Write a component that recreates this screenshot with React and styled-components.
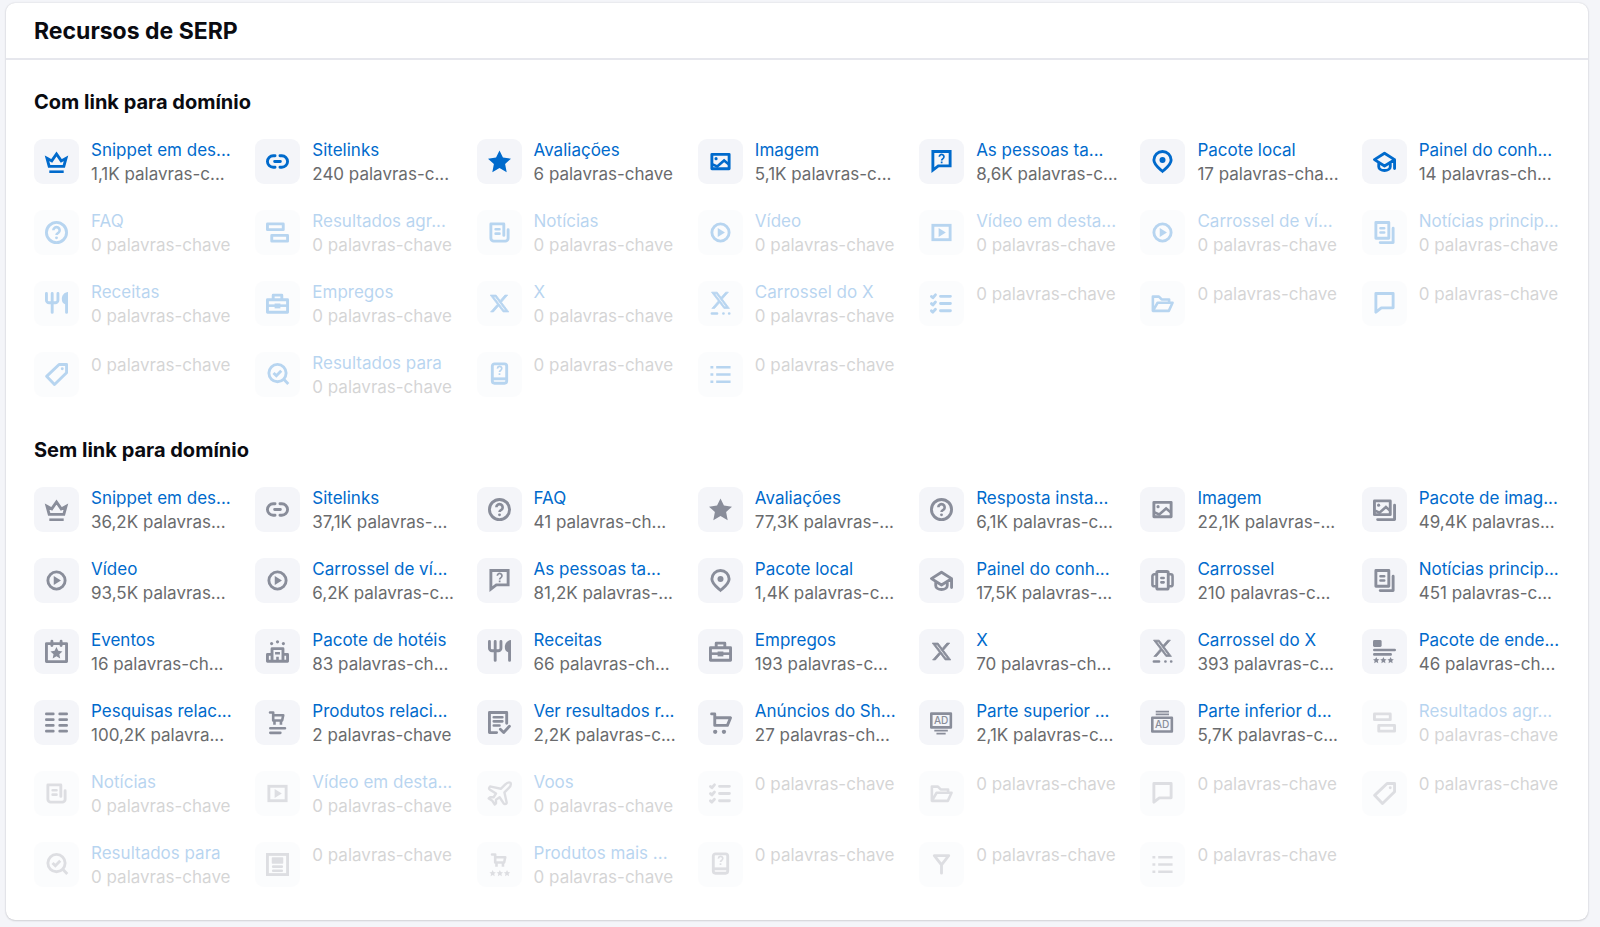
import React from "react";
import styled, { createGlobalStyle } from "styled-components";

const GlobalStyle = createGlobalStyle`
    :root {
        --page: #f4f5f9;
        --title: #0a0b11;
        --blue: #006aCC;
        --gray: #6a6b6d;
        --icon-gray: #898d9a;
        --line: #e6e7ed;
    }

    body {
        margin: 0;
        background-color: var(--page);
        font-family: Inter, "Liberation Sans", sans-serif;
    }
`

const Card = styled.section`
    margin: 3px 12px 8px 6px;
    background-color: white;
    border-radius: 9px;
    box-shadow: 0 0 2px rgba(25, 27, 35, 0.16), 0 1px 2px rgba(25, 27, 35, 0.12);
`

const CardHeader = styled.header`
    padding: 13px 29px 11px 28px;
    border-bottom: 2px solid var(--line);
`

const CardTitle = styled.h2`
    margin: 0;
    font-size: 23px;
    line-height: 31px;
    font-weight: 700;
    color: var(--title);
`

const CardBody = styled.div`
    display: flex;
    flex-direction: column;
    gap: 35px;
    padding: 28px 29px 29px 28px;
`

const GroupTitle = styled.h3`
    margin: 0 0 23px 0;
    font-size: 20px;
    line-height: 28px;
    font-weight: 700;
    color: var(--title);
`

const FeatureGrid = styled.ul`
    display: grid;
    grid-template-columns: repeat(7, minmax(0, 1fr));
    gap: 23px 24px;
    margin: 0;
    padding: 0 0 1px 0;
    list-style: none;
`

const FeatureItem = styled.li`
    display: flex;
    align-items: flex-start;
    gap: 12px;
    min-height: 48px;
    opacity: ${({ $empty }) => ($empty ? 0.28 : 1)};
`

const IconBox = styled.span`
    display: flex;
    flex: none;
    align-items: center;
    justify-content: center;
    width: 45px;
    height: 45px;
    border-radius: 9px;
    background-color: var(--page);
    color: ${({ $linked }) => ($linked ? 'var(--blue)' : 'var(--icon-gray)')};
`

const Glyph = styled.svg`
    width: 23px;
    height: 23px;
    overflow: visible;
    fill: none;
    stroke: currentColor;
    stroke-width: 2;

    .solid {
        fill: currentColor;
        stroke: none;
    }

    .thin {
        stroke-width: 1.2;
    }

    .medium {
        stroke-width: 1.8;
    }

    .logo {
        fill: currentColor;
        stroke-width: 0.9;
    }

    .round {
        stroke-linecap: round;
        stroke-linejoin: round;
    }

    text {
        fill: currentColor;
        stroke: none;
        font-size: 7px;
        font-weight: 500;
        text-anchor: middle;
    }
`

const FeatureText = styled.div`
    min-width: 0;
    white-space: nowrap;
    font-size: 17px;
`

const FeatureLink = styled.a`
    display: block;
    line-height: 22px;
    color: var(--blue);
    text-decoration: none;

    &:hover {
        text-decoration: underline;
    }
`

const FeatureCount = styled.div`
    line-height: 26px;
    color: var(--gray);
`

const starPath = "M8 .3 10.4 5.3 16 6 11.9 9.7 13 15.4 8 12.6 3 15.4 4.1 9.7 0 6 5.6 5.3Z"
const xPath = "M18.244 2.25h3.308l-7.227 8.26 8.502 11.24H16.17l-5.214-6.817L4.99 21.75H1.68l7.73-8.835L1.254 2.25H8.08l4.713 6.231zm-1.161 17.52h1.833L7.084 4.126H5.117z"

const SmallStars = ({ from }) => (
    <>
        {[0, 5, 10].map((step) => (
            <path key={step} className="solid" d={starPath} transform={`translate(${from + step} 11.8) scale(.28)`} />
        ))}
    </>
)

const SmallCart = () => (
    <>
        <path className="round medium" d="M2.8 1H5v5.6h6.2L12 3H5" />
        <path className="medium" d="M5.9 7v2.6M10.4 7v2.6" />
    </>
)

const icons = {
    crown: <><path d="M1.4 5.8 4.7 7.6 8 2.8l3.3 4.8 3.3-1.8-1.5 5.6H2.9Z" /><path className="medium" d="M3 15.1h10" /></>,
    link: <path className="round" d="M6.3 4H5a4 4 0 0 0 0 8h1.3M9.7 4H11a4 4 0 0 1 0 8H9.7M6 8h4" />,
    star: <path className="solid" d={starPath} />,
    image: (
        <>
            <rect className="round" x="2" y="3" width="12" height="10" />
            <path className="medium" d="m2.5 10 3.2 1.4 4.8-4.1 3.2 2.6" />
            <circle className="solid" cx="4.9" cy="6" r="1.1" />
        </>
    ),
    images: (
        <>
            <rect className="round" x="1" y="2" width="11" height="9.6" />
            <path className="medium" d="m1.5 8.8 3 1.4L9 6.3l2.8 2.5" />
            <circle className="solid" cx="3.9" cy="5" r="1.1" />
            <path className="round" d="M15 5v10H3.2" />
        </>
    ),
    askChat: (
        <>
            <path d="M2 14V1h12v10H5.8Z" />
            <path className="thin" d="M6.5 4.7a1.6 1.6 0 1 1 2.5 1.3c-.7.5-.9.7-.9 1.3M8.1 8v1.2" />
        </>
    ),
    pin: <><path d="M8 14.8C6 13 2 10.5 2 7a6 6 0 0 1 12 0c0 3.5-4 6-6 7.8Z" /><circle className="solid" cx="8" cy="7" r="2.1" /></>,
    cap: <path className="round" d="M1 6.7 8 2.3l7 4.4-7 4.4ZM15 6.7V12.9M4 9v2.6c0 1.5 1.8 2.7 4 2.7s4-1.2 4-2.7V9" />,
    question: (
        <>
            <circle cx="8" cy="8" r="7" />
            <path className="medium" d="M5.8 6.5a2.2 2.2 0 1 1 3.4 1.8c-.9.5-1.2.7-1.2 1.4" />
            <circle className="solid" cx="8" cy="11.7" r="1" />
        </>
    ),
    blocks: <><rect className="round" x="1" y="2" width="11" height="4" /><rect className="round" x="4" y="10" width="11" height="4" /></>,
    news: (
        <>
            <path className="round" d="M14 6v6a2 2 0 0 1-2 2H4a2 2 0 0 1-2-2V2h9v8" />
            <path className="round medium" d="M5.3 5.7H8M5.3 8.8H8" />
        </>
    ),
    video: <><circle cx="8" cy="8" r="6" /><path className="solid" d="M6.1 4.8 11.1 8l-5 3.2Z" /></>,
    videoBox: <><rect x="2" y="3" width="12" height="10" /><path className="solid" d="M6 4.9 11 8l-5 3.1Z" /></>,
    topNews: (
        <>
            <rect className="round" x="2" y="1" width="9" height="11" />
            <path className="round medium" d="M5.2 5h2.6M5.2 8h2.6" />
            <path className="round" d="M14 5v10H5" />
        </>
    ),
    cutlery: (
        <>
            <path className="round" d="M1 1v4.7a1.8 1.8 0 0 0 1.8 1.8h4.4A1.8 1.8 0 0 0 9 5.7V1M5 1v13.2M15 8v6.2" />
            <path className="solid" d="M16 0c-2.6.2-4.3 2.3-4.3 4.8 0 1.9.8 3.2 2.3 3.7h2Z" />
        </>
    ),
    briefcase: (
        <>
            <path className="round" d="M5 5V2.2h6V5" />
            <rect className="round" x="1" y="5.4" width="14" height="8.7" />
            <path className="medium" d="M1 9.5h14" />
            <path className="solid" d="M6 8h4v3.4H6Z" />
        </>
    ),
    x: <path className="logo" d={xPath} transform="translate(.8 .8) scale(.6)" />,
    xCarousel: (
        <>
            <path className="logo" d={xPath} transform="translate(1 -1.2) scale(.58)" />
            <path className="round medium" d="M2 14.9h3.6M10 14.9h.1M14 14.9h.1" />
        </>
    ),
    checklist: <path className="round" d="M1 3.1l1 .9 1.8-2M1 8.1l1 .9 1.8-2M1 13.1l1 .9 1.8-2M7.3 3h6.9M7.3 8h6.9M7.3 13h6.9" />,
    folder: <path className="round medium" d="M1.3 13V3.2h4.2l1.9 2h5.2v2.3M1.3 13.1l3.3-5.6H15l-2.6 5.6Z" />,
    chat: <path className="round" d="M2 14V1h12v10H5.8Z" />,
    tag: <><path className="round" d="M9.8 1H15v5.8L6.6 15 1.1 9.3Z" /><circle className="solid" cx="12" cy="4" r="1" /></>,
    searchCheck: <><circle cx="8" cy="7" r="6" /><path d="M12.2 11.2l3.3 3.4M5.2 6.9l2 1.9 3.4-3.4" /></>,
    book: (
        <>
            <rect x="3" y=".6" width="10" height="13.5" rx="1.5" />
            <path d="M3 11h10" />
            <path className="thin" d="M6.6 3.9a1.5 1.5 0 1 1 2.3 1.2c-.7.5-.9.6-.9 1.2M8 7.2v1.2" />
        </>
    ),
    list: <path className="medium" d="M5 3h10M5 8h10M5 13h10M1 3h2M1 8h2M1 13h2" />,
    carousel: (
        <>
            <rect className="round" x="4" y="1.7" width="8" height="12.3" rx="1" />
            <path className="round medium" d="M3.5 3.7H2.3A1.3 1.3 0 0 0 1 5v5.7A1.3 1.3 0 0 0 2.3 12h1.2M12.5 3.7h1.2A1.3 1.3 0 0 1 15 5v5.7a1.3 1.3 0 0 1-1.3 1.3h-1.2" />
            <path className="round medium" d="M7.2 6.3h1.6M7.2 9.3h1.6" />
        </>
    ),
    event: (
        <>
            <rect className="round" x="1" y="2.5" width="14" height="12.5" />
            <path className="round" d="M4.8.8v3M11.2.8v3" />
            <path className="solid" d={starPath} transform="translate(3.8 4.8) scale(.52)" />
        </>
    ),
    hotel: (
        <>
            <path className="round" d="M4.2 14.8V6h7.6v8.8M1 14.8V10h3M15 14.8V10h-3M1 14.8h14" />
            <path className="medium" d="M6.3 9.2h3.4M8 11.7v3" />
            <circle className="solid" cx="3.9" cy="2.5" r="1.1" />
            <circle className="solid" cx="8" cy="1.3" r="1.1" />
            <circle className="solid" cx="12.1" cy="2.5" r="1.1" />
        </>
    ),
    address: (
        <>
            <rect className="solid" x="0" y="0" width="6" height="4.8" rx="1" />
            <path className="round medium" d="M.9 7h14.2M.9 10h11.4" />
            <SmallStars from={0} />
        </>
    ),
    columns: <path className="round medium" d="M.9 2h4.9M.9 6h4.9M.9 10h4.9M.9 14h4.9M10.2 2h4.9M10.2 6h4.9M10.2 10h4.9M10.2 14h4.9" />,
    relatedCart: <><SmallCart /><path className="round medium" d="M3 12h10.2M3 15.2h7" /></>,
    docCheck: (
        <>
            <path className="round" d="M6 15H1V1h12v7.5M8.6 12.7l2.3 2.2 4-4.3" />
            <path className="round medium" d="M4 4.3h6M4 7.2h6M4 10.1h4" />
        </>
    ),
    cart: (
        <>
            <path className="round" d="M1.8 2H4v8h8.8l2.2-5.3H4" />
            <circle className="solid" cx="4.3" cy="14.5" r="1.5" />
            <circle className="solid" cx="10.4" cy="14.5" r="1.5" />
        </>
    ),
    adTop: (
        <>
            <rect className="round medium" x=".9" y="1.8" width="13.6" height="9.6" />
            <text x="7.7" y="9.1">AD</text>
            <path className="thin" d="M3 13.7h9.4M4.5 15.7h6.4" />
        </>
    ),
    adBottom: (
        <>
            <rect className="round medium" x=".9" y="4.7" width="13.6" height="9.6" />
            <text x="7.7" y="12">AD</text>
            <path className="thin" d="M3.3.4h9.2M3.3 2.4h9.2" />
        </>
    ),
    plane: (
        <path
            className="round"
            transform="translate(-2 -2) scale(.84)"
            d="M17.8 19.2 16 11l3.5-3.5C21 6 21.5 4 21 3c-1-.5-3 0-4.5 1.5L13 8 4.8 6.2c-.5-.1-.9.1-1.1.5l-.3.5c-.2.5-.1 1 .3 1.3L9 12l-2 3H4l-1 1 3 2 2 3 1-1v-3l3-2 3.5 5.3c.3.4.8.5 1.3.3l.5-.2c.4-.3.6-.7.5-1.2z"
        />
    ),
    page: (
        <>
            <rect x="1" y="1" width="14" height="14" />
            <rect className="solid" x="4" y="3" width="8" height="4.4" rx=".5" />
            <path className="round medium" d="M5 9.5h6M5 12.3h6" />
        </>
    ),
    popularCart: <><SmallCart /><SmallStars from={1} /></>,
    filter: <path className="round" d="M3 1.8h10L8 8.2ZM8 8.2V14" />,
}

const linkedFeatures = [
    { icon: 'crown', name: 'Snippet em des...', count: '1,1K palavras-c...' },
    { icon: 'link', name: 'Sitelinks', count: '240 palavras-c...' },
    { icon: 'star', name: 'Avaliações', count: '6 palavras-chave' },
    { icon: 'image', name: 'Imagem', count: '5,1K palavras-c...' },
    { icon: 'askChat', name: 'As pessoas ta...', count: '8,6K palavras-c...' },
    { icon: 'pin', name: 'Pacote local', count: '17 palavras-cha...' },
    { icon: 'cap', name: 'Painel do conh...', count: '14 palavras-ch...' },
    { icon: 'question', name: 'FAQ' },
    { icon: 'blocks', name: 'Resultados agr...' },
    { icon: 'news', name: 'Notícias' },
    { icon: 'video', name: 'Vídeo' },
    { icon: 'videoBox', name: 'Vídeo em desta...' },
    { icon: 'video', name: 'Carrossel de ví...' },
    { icon: 'topNews', name: 'Notícias princip...' },
    { icon: 'cutlery', name: 'Receitas' },
    { icon: 'briefcase', name: 'Empregos' },
    { icon: 'x', name: 'X' },
    { icon: 'xCarousel', name: 'Carrossel do X' },
    { icon: 'checklist' },
    { icon: 'folder' },
    { icon: 'chat' },
    { icon: 'tag' },
    { icon: 'searchCheck', name: 'Resultados para' },
    { icon: 'book' },
    { icon: 'list' },
]

const unlinkedFeatures = [
    { icon: 'crown', name: 'Snippet em des...', count: '36,2K palavras...' },
    { icon: 'link', name: 'Sitelinks', count: '37,1K palavras-...' },
    { icon: 'question', name: 'FAQ', count: '41 palavras-ch...' },
    { icon: 'star', name: 'Avaliações', count: '77,3K palavras-...' },
    { icon: 'question', name: 'Resposta insta...', count: '6,1K palavras-c...' },
    { icon: 'image', name: 'Imagem', count: '22,1K palavras-...' },
    { icon: 'images', name: 'Pacote de imag...', count: '49,4K palavras...' },
    { icon: 'video', name: 'Vídeo', count: '93,5K palavras...' },
    { icon: 'video', name: 'Carrossel de ví...', count: '6,2K palavras-c...' },
    { icon: 'askChat', name: 'As pessoas ta...', count: '81,2K palavras-...' },
    { icon: 'pin', name: 'Pacote local', count: '1,4K palavras-c...' },
    { icon: 'cap', name: 'Painel do conh...', count: '17,5K palavras-...' },
    { icon: 'carousel', name: 'Carrossel', count: '210 palavras-c...' },
    { icon: 'topNews', name: 'Notícias princip...', count: '451 palavras-c...' },
    { icon: 'event', name: 'Eventos', count: '16 palavras-ch...' },
    { icon: 'hotel', name: 'Pacote de hotéis', count: '83 palavras-ch...' },
    { icon: 'cutlery', name: 'Receitas', count: '66 palavras-ch...' },
    { icon: 'briefcase', name: 'Empregos', count: '193 palavras-c...' },
    { icon: 'x', name: 'X', count: '70 palavras-ch...' },
    { icon: 'xCarousel', name: 'Carrossel do X', count: '393 palavras-c...' },
    { icon: 'address', name: 'Pacote de ende...', count: '46 palavras-ch...' },
    { icon: 'columns', name: 'Pesquisas relac...', count: '100,2K palavra...' },
    { icon: 'relatedCart', name: 'Produtos relaci...', count: '2 palavras-chave' },
    { icon: 'docCheck', name: 'Ver resultados r...', count: '2,2K palavras-c...' },
    { icon: 'cart', name: 'Anúncios do Sh...', count: '27 palavras-ch...' },
    { icon: 'adTop', name: 'Parte superior ...', count: '2,1K palavras-c...' },
    { icon: 'adBottom', name: 'Parte inferior d...', count: '5,7K palavras-c...' },
    { icon: 'blocks', name: 'Resultados agr...' },
    { icon: 'news', name: 'Notícias' },
    { icon: 'videoBox', name: 'Vídeo em desta...' },
    { icon: 'plane', name: 'Voos' },
    { icon: 'checklist' },
    { icon: 'folder' },
    { icon: 'chat' },
    { icon: 'tag' },
    { icon: 'searchCheck', name: 'Resultados para' },
    { icon: 'page' },
    { icon: 'popularCart', name: 'Produtos mais ...' },
    { icon: 'book' },
    { icon: 'filter' },
    { icon: 'list' },
]

const Feature = ({ data, linked }) => (
    <FeatureItem $empty={!data.count}>
        <IconBox $linked={linked}>
            <Glyph viewBox="0 0 16 16" aria-hidden="true">{icons[data.icon]}</Glyph>
        </IconBox>
        <FeatureText>
            {data.name && <FeatureLink href="#">{data.name}</FeatureLink>}
            <FeatureCount>{data.count || '0 palavras-chave'}</FeatureCount>
        </FeatureText>
    </FeatureItem>
)

const FeatureGroup = ({ title, features, linked }) => (
    <div>
        <GroupTitle>{title}</GroupTitle>
        <FeatureGrid>
            {features.map((feature, index) => (
                <Feature key={index} data={feature} linked={linked} />
            ))}
        </FeatureGrid>
    </div>
)

const App = () => (
    <>
        <GlobalStyle />
        <Card>
            <CardHeader>
                <CardTitle>Recursos de SERP</CardTitle>
            </CardHeader>
            <CardBody>
                <FeatureGroup title="Com link para domínio" features={linkedFeatures} linked />
                <FeatureGroup title="Sem link para domínio" features={unlinkedFeatures} />
            </CardBody>
        </Card>
    </>
)

export default App
